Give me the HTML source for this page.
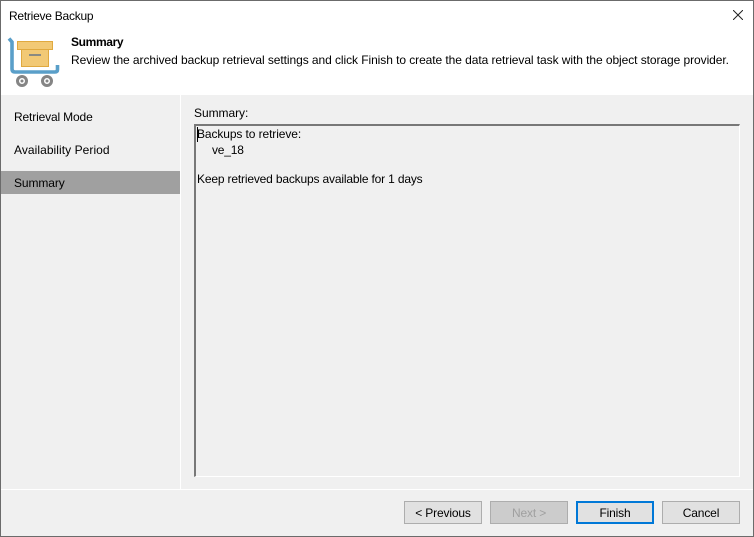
<!DOCTYPE html>
<html><head><meta charset="utf-8">
<style>
html,body{margin:0;padding:0}
body{width:754px;height:537px;position:relative;overflow:hidden;background:#f0f0f0;font-family:"Liberation Sans",sans-serif;font-size:12px;color:#000}
.a{position:absolute}
.t{position:absolute;white-space:nowrap;line-height:14px;letter-spacing:-.15px}
.b{position:absolute;top:501px;width:76px;height:21px;line-height:22px;box-sizing:content-box;background:#e1e1e1;border:1px solid #adadad;text-align:center;font-size:12px;letter-spacing:-.15px}
</style></head><body>
<div class="a" style="left:0;top:0;width:754px;height:95px;background:#fff"></div>
<div class="t" style="left:9px;top:9px;letter-spacing:-.25px">Retrieve Backup</div>
<svg class="a" style="left:733px;top:10px" width="10" height="10" viewBox="0 0 10 10"><path d="M0 0L10 10M10 0L0 10" stroke="#222" stroke-width="1" fill="none"/></svg>
<svg class="a" style="left:0;top:30px" width="66" height="60" viewBox="0 0 66 60">
<path d="M9 8.500L12 12V39Q12 42 15 42H55Q57.500 42 57.500 39.500V35" fill="none" stroke="#5a9fc9" stroke-width="3.600" stroke-linecap="butt"/>
<rect x="21.500" y="19.500" width="27" height="17" fill="#f2c975" stroke="#e0a93f"/>
<rect x="17.500" y="11.500" width="35" height="8" fill="#f2c975" stroke="#e0a93f"/>
<rect x="29" y="24" width="12" height="2" fill="#8a8a82"/>
<circle cx="22" cy="51" r="4.500" fill="#fff" stroke="#858585" stroke-width="3"/>
<circle cx="47" cy="51" r="4.500" fill="#fff" stroke="#858585" stroke-width="3"/>
<circle cx="22" cy="51" r="1.500" fill="#858585"/>
<circle cx="47" cy="51" r="1.500" fill="#858585"/>
</svg>
<div class="t" style="left:71px;top:35px;font-weight:bold;letter-spacing:-.35px">Summary</div>
<div class="t" style="left:71px;top:53px;letter-spacing:-.07px">Review the archived backup retrieval settings and click Finish to create the data retrieval task with the object storage provider.</div>
<div class="a" style="left:180px;top:95px;width:1px;height:394px;background:#fff"></div>
<div class="t" style="left:14px;top:110px">Retrieval Mode</div>
<div class="t" style="left:14px;top:143px;letter-spacing:.06px">Availability Period</div>
<div class="a" style="left:1px;top:171px;width:179px;height:23px;background:#a0a0a0"></div>
<div class="t" style="left:14px;top:176px;letter-spacing:-.1px">Summary</div>
<div class="t" style="left:194px;top:106px;letter-spacing:-.05px">Summary:</div>
<div class="a" style="left:194px;top:124px;width:546px;height:353px;box-sizing:border-box;border:2px solid #fff;border-top-color:#787878;border-left-color:#787878;border-right-width:1px;border-bottom-width:1px"></div>
<div class="a" style="left:197px;top:127px;width:1px;height:15px;background:#000"></div>
<div class="t" style="left:197px;top:127px;letter-spacing:-.1px">Backups to retrieve:</div>
<div class="t" style="left:212px;top:143px;letter-spacing:-.2px">ve_18</div>
<div class="t" style="left:197px;top:172px;letter-spacing:-.17px">Keep retrieved backups available for 1 days</div>
<div class="a" style="left:0;top:489px;width:754px;height:1px;background:#fff"></div>
<div class="b" style="left:404px">&lt; Previous</div>
<div class="b" style="left:490px;background:#ccc;color:#a0a0a0">Next &gt;</div>
<div class="b" style="left:576px;width:74px;height:19px;line-height:20px;border:2px solid #0078d7">Finish</div>
<div class="b" style="left:662px">Cancel</div>
<div class="a" style="left:0;top:0;width:752px;height:535px;border:1px solid #6b6b6b"></div>
</body></html>
